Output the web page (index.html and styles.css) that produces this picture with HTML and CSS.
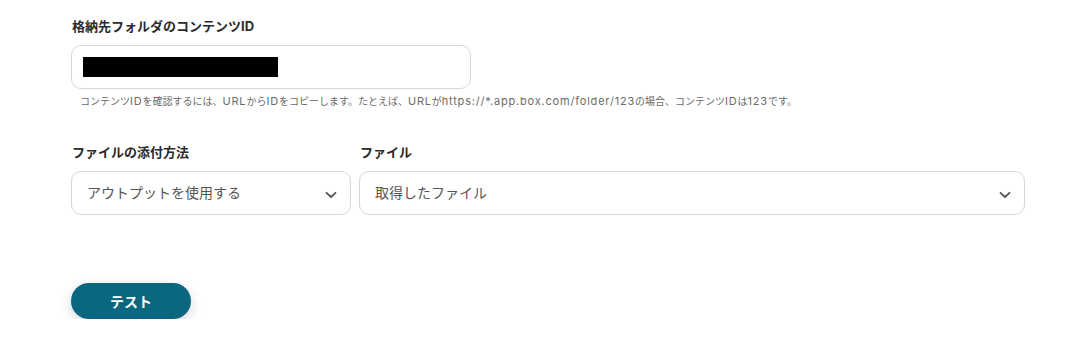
FILE: index.html
```html
<!DOCTYPE html>
<html>
<head>
<meta http-equiv="Content-Type" content="text/html; charset=utf-8"/>
<title>設定</title>
<link rel="stylesheet" href="styles.css">
</head>
<body>
<div class="form">
  <div class="field">
    <label class="label">格納先フォルダのコンテンツID</label>
    <div class="input"><span class="masked"></span></div>
    <p class="help">コンテンツ<span class="lat">ID</span>を確認するには、<span class="lat">URL</span>から<span class="lat">ID</span>をコピーします。たとえば、<span class="lat">URL</span>が<span class="lat">https://*.app.box.com/folder/123</span>の場合、コンテンツ<span class="lat">ID</span>は<span class="lat">123</span>です。</p>
  </div>

  <div class="row">
    <div class="field method">
      <label class="label">ファイルの添付方法</label>
      <div class="select">
        <span>アウトプットを使用する</span>
        <svg class="chev" width="12" height="8" viewBox="0 0 12 8"><path d="M1.5 1.8 L6 6 L10.5 1.8" fill="none" stroke="#555" stroke-width="1.8" stroke-linecap="round" stroke-linejoin="round"/></svg>
      </div>
    </div>
    <div class="field file">
      <label class="label">ファイル</label>
      <div class="select">
        <span>取得したファイル</span>
        <svg class="chev" width="12" height="8" viewBox="0 0 12 8"><path d="M1.5 1.8 L6 6 L10.5 1.8" fill="none" stroke="#555" stroke-width="1.8" stroke-linecap="round" stroke-linejoin="round"/></svg>
      </div>
    </div>
  </div>

  <button class="btn">テスト</button>
</div>
</body>
</html>
```

FILE: styles.css
```css
body {
  margin: 0;
  background-color: white;
  font-family: Inter, "Noto Sans CJK JP", sans-serif;
  color: #333;
}

.form {
  width: 954px;
  padding: 16px 0 0 71px;
}

.label {
  display: block;
  font-size: 13px;
  font-weight: bold;
  line-height: 20px;
  color: #2b2b2b;
  padding-left: 1px;
}

.input {
  box-sizing: border-box;
  width: 400px;
  height: 44px;
  margin-top: 9px;
  border: 1px solid #d3d7de;
  border-radius: 10px;
  padding: 11px 0 0 11px;
}

.masked {
  display: block;
  width: 195px;
  height: 20px;
  background: #000;
}

.help {
  margin: 5px 0 0 9px;
  font-size: 10px;
  line-height: 14px;
  color: #6b6b6b;
  white-space: nowrap;
}

/* latin runs in the hint are set wider than the kana */
.help .lat {
  font-size: 11px;
  letter-spacing: 0.8px;
}

.row {
  display: flex;
  gap: 8px;
  margin-top: 34px;
}

.method {
  width: 280px;
}

.file {
  flex: 1;
}

.select {
  box-sizing: border-box;
  height: 44px;
  margin-top: 9px;
  border: 1px solid #d3d7de;
  border-radius: 10px;
  padding: 0 13px 0 15px;
  display: flex;
  align-items: center;
  justify-content: space-between;
  font-size: 14px;
  color: #555;
}

.select span {
  margin-top: -3px;
}

.chev {
  margin-top: 4px;
}

.btn {
  margin-top: 68px;
  width: 120px;
  height: 36px;
  border: none;
  border-radius: 18px;
  background: #0b6680;
  color: white;
  font-family: inherit;
  font-size: 14px;
  font-weight: bold;
  box-shadow: 0 4px 12px rgba(0, 30, 60, 0.18);
}
```
